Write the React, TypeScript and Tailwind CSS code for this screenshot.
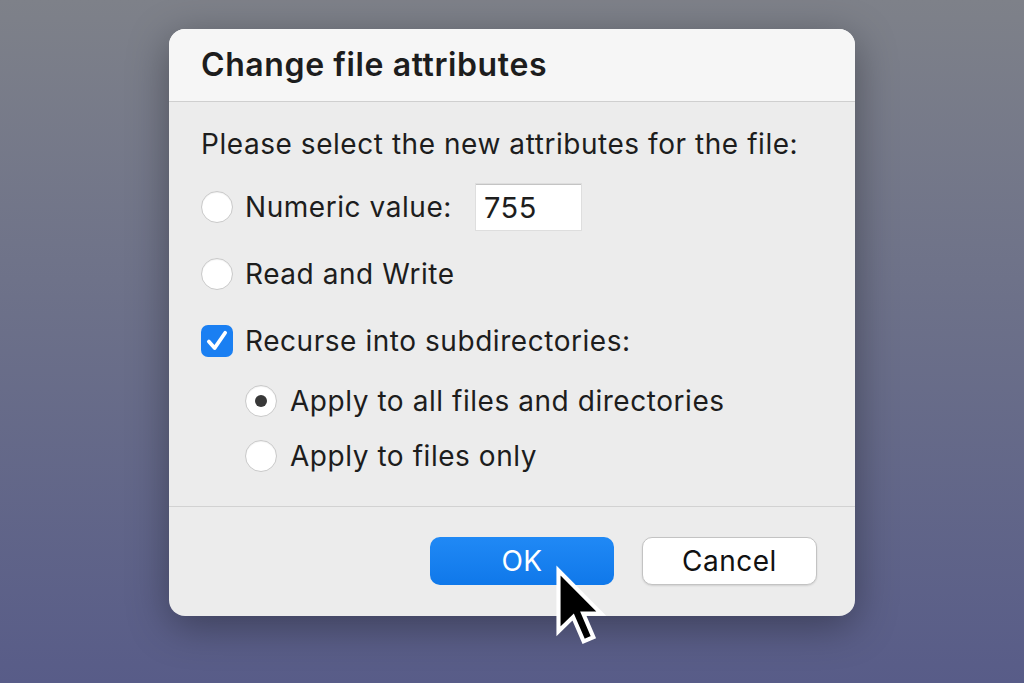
import { useState } from "react";

function Radio({ checked }: { checked: boolean }) {
  return (
    <span className="flex h-[32px] w-[32px] shrink-0 items-center justify-center rounded-full border-[1.5px] border-[#c9c9c9] bg-white shadow-[inset_0_1px_1px_rgba(0,0,0,0.06)]">
      {checked && <span className="h-[12px] w-[12px] rounded-full bg-[#383838]" />}
    </span>
  );
}

function Checkbox() {
  return (
    <span className="flex h-[32px] w-[32px] shrink-0 items-center justify-center rounded-[7px] bg-[#1a7ff2]">
      <svg width="24" height="24" viewBox="0 0 22 22" fill="none">
        <path d="M3.5 11.5 L8.8 17.5 L18.5 3.5" stroke="white" strokeWidth="3.4" strokeLinecap="round" strokeLinejoin="round" />
      </svg>
    </span>
  );
}

function Cursor() {
  return (
    <svg
      className="absolute left-[551px] top-[563px]"
      width="60"
      height="90"
      viewBox="-2 -2 16 24"
    >
      <path
        d="M0 0 L0 16.2 L3.9 12.4 L6.7 18.9 L9.3 17.8 L6.6 11.5 L11.4 11.5 Z"
        fill="black"
        stroke="white"
        strokeWidth="1.1"
        strokeLinejoin="miter"
      />
    </svg>
  );
}

export default function App() {
  const [mode, setMode] = useState("all");

  return (
    <div
      className="relative h-[683px] w-[1024px] overflow-hidden bg-gradient-to-b from-[#7e8189] to-[#585c88] pl-[169px] pt-[29px]"
      style={{ fontFamily: "Inter, 'Liberation Sans', sans-serif" }}
    >
      <div className="flex h-[587px] w-[686px] flex-col overflow-hidden rounded-[16px] bg-[#ececec] text-[#1d1d1d] shadow-[0_10px_40px_rgba(0,0,0,0.35)]">
        <div className="flex h-[73px] shrink-0 items-center border-b border-[#cfcfcf] bg-[#f6f6f6] px-[32px]">
          <h1 className="text-[32px] font-semibold tracking-[0.6px]">Change file attributes</h1>
        </div>

        <div className="flex h-[404px] shrink-0 flex-col px-[32px] pt-[24px] text-[28px] tracking-[0.55px]">
          <p className="leading-[36px]">Please select the new attributes for the file:</p>

          <div className="mt-[22px] flex h-[46px] items-center">
            <Radio checked={false} />
            <span className="ml-[12px]">Numeric value:</span>
            <span className="ml-[24px] flex h-[46px] w-[105px] items-center border-t border-[#c4c4c4] bg-white pl-[8px] text-[29px] shadow-[0_0_0_1px_rgba(0,0,0,0.06)]">
              755
            </span>
          </div>

          <div className="mt-[21px] flex h-[46px] items-center">
            <Radio checked={false} />
            <span className="ml-[12px]">Read and Write</span>
          </div>

          <div className="mt-[21px] flex h-[46px] items-center">
            <Checkbox />
            <span className="ml-[12px]">Recurse into subdirectories:</span>
          </div>

          <div className="ml-[44px] mt-[14px] flex h-[46px] items-center" onClick={() => setMode("all")}>
            <Radio checked={mode === "all"} />
            <span className="ml-[13px]">Apply to all files and directories</span>
          </div>

          <div className="ml-[44px] mt-[9px] flex h-[46px] items-center" onClick={() => setMode("files")}>
            <Radio checked={mode === "files"} />
            <span className="ml-[13px]">Apply to files only</span>
          </div>
        </div>

        <div className="flex flex-1 items-start justify-end gap-[28px] border-t border-[#d2d2d2] pr-[38px] pt-[30px]">
          <button className="h-[48px] w-[184px] rounded-[10px] bg-gradient-to-b from-[#2089f5] to-[#0f78ea] text-[28px] tracking-[0.5px] text-white">
            OK
          </button>
          <button className="h-[48px] w-[175px] rounded-[10px] border border-[#c3c3c3] bg-white text-[28px] tracking-[0.5px] text-[#111] shadow-[0_1px_2px_rgba(0,0,0,0.12)]">
            Cancel
          </button>
        </div>
      </div>

      <Cursor />
    </div>
  );
}
